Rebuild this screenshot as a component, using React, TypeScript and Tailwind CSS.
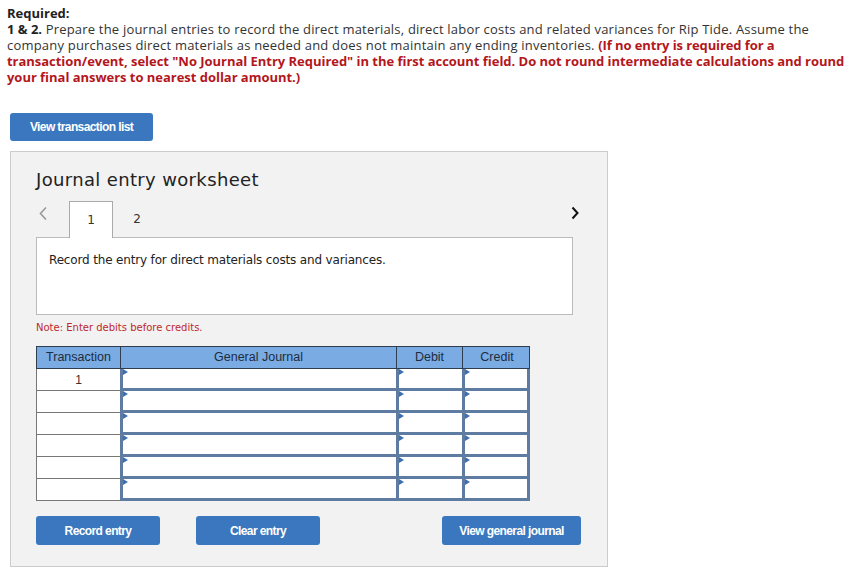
import React from "react";

const Tri = () => (
  <span className="absolute left-0 top-0 w-0 h-0 border-t-[3px] border-b-[3px] border-l-[5px] border-t-transparent border-b-transparent border-l-[#3e6fb0]" />
);

const InputCell = ({ first, last }: { first: boolean; last?: boolean }) => (
  <div
    className={
      "relative bg-white h-full border-[#5e7ca2] border-l-[3px] border-b-[3px] " +
      (first ? "border-t-0 " : "") +
      (last ? "border-r-[3px]" : "")
    }
  >
    <Tri />
  </div>
);

export default function App() {
  const rows = [0, 1, 2, 3, 4, 5];
  return (
    <div className="w-[859px] h-[574px] bg-white overflow-hidden" style={{ fontFamily: '"Open Sans", Lato, sans-serif' }}>
      <div className="pl-[7px] pt-[5px] text-[13px] leading-[16px] text-[#333] whitespace-nowrap tracking-[0.2px]" style={{ fontFamily: '"Open Sans", Lato, sans-serif' }}>
        <div className="font-bold text-[#222] tracking-normal">Required:</div>
        <div>
          <span className="font-bold text-[#222] tracking-normal">1 &amp; 2.</span> Prepare the journal entries to record the direct materials, direct labor costs and related variances for Rip Tide. Assume the
        </div>
        <div>
          company purchases direct materials as needed and does not maintain any ending inventories.{" "}
          <span className="font-bold text-[#b3161c] tracking-[-0.1px]">(If no entry is required for a</span>
        </div>
        <div className="font-bold text-[#b3161c] tracking-[-0.03px]">
          transaction/event, select "No Journal Entry Required" in the first account field. Do not round intermediate calculations and round
        </div>
        <div className="font-bold text-[#b3161c] tracking-[-0.03px]">your final answers to nearest dollar amount.)</div>
      </div>

      <div className="pl-[10px] pt-[28px]">
        <button
          className="w-[143px] h-[28px] rounded-[3px] bg-[#3a77be] text-white text-[12px] font-bold tracking-[-0.6px]"
          style={{ fontFamily: '"Liberation Sans", Arial, sans-serif' }}
        >
          View transaction list
        </button>
      </div>

      <div className="ml-[10px] mt-[10px] w-[598px] h-[416px] bg-[#f2f2f2] border border-[#cccccc] pl-[25px] pt-[17px]">
        <div className="text-[18px] leading-[22px] text-[#222] tracking-[0.35px]" style={{ fontFamily: '"DejaVu Sans", Verdana, sans-serif' }}>
          Journal entry worksheet
        </div>

        <div className="mt-[9px] w-[537px] flex items-end relative h-[37px]" style={{ fontFamily: '"DejaVu Sans", Verdana, sans-serif' }}>
          <svg className="absolute left-[2px] top-[6px]" width="10" height="15" viewBox="0 0 10 15">
            <path d="M8 1.5 L2.5 7.5 L8 13.5" fill="none" stroke="#999999" strokeWidth="1.6" />
          </svg>
          <div className="ml-[33px] w-[44px] h-[37px] bg-white border-t border-l border-r border-[#aaaaaa] flex items-center justify-center text-[12px] text-[#333] relative z-10 -mb-px">
            1
          </div>
          <div className="w-[48px] h-[36px] flex items-center justify-center text-[12px] text-[#333]">2</div>
          <svg className="absolute right-[-7px] top-[6px]" width="10" height="14" viewBox="0 0 10 14">
            <path d="M2.5 1.5 L7.5 7 L2.5 12.5" fill="none" stroke="#111111" strokeWidth="2" />
          </svg>
        </div>

        <div
          className="w-[537px] h-[78px] bg-white border border-[#bbbbbb] px-[12px] pt-[13px] text-[12px] text-[#222] tracking-[-0.16px]"
          style={{ fontFamily: '"DejaVu Sans", Verdana, sans-serif' }}
        >
          Record the entry for direct materials costs and variances.
        </div>

        <div className="mt-[5px] text-[10px] text-[#c0282d]" style={{ fontFamily: '"DejaVu Sans", Verdana, sans-serif' }}>
          Note: Enter debits before credits.
        </div>

        <div className="mt-[11px] w-[494px]" style={{ fontFamily: '"Liberation Sans", Arial, sans-serif' }}>
          <div className="grid grid-cols-[84px_276px_66px_68px] h-[23px] bg-[#7aabe3] border border-[#2f3e4f] text-[12.5px] text-[#1d2d40]">
            <div className="flex items-center justify-center border-r border-[#2f3e4f]">Transaction</div>
            <div className="flex items-center justify-center border-r border-[#2f3e4f]">General Journal</div>
            <div className="flex items-center justify-center border-r border-[#2f3e4f]">Debit</div>
            <div className="flex items-center justify-center">Credit</div>
          </div>
          {rows.map((r) => (
            <div key={r} className="grid grid-cols-[84px_276px_66px_68px] h-[22px]">
              <div className="bg-white border-l border-b border-[#777777] flex items-center justify-center text-[12px] text-[#333]">
                {r === 0 ? "1" : ""}
              </div>
              <InputCell first={r === 0} />
              <InputCell first={r === 0} />
              <InputCell first={r === 0} last />
            </div>
          ))}
        </div>

        <div className="mt-[15px] w-[545px] flex items-center" style={{ fontFamily: '"Liberation Sans", Arial, sans-serif' }}>
          <button className="w-[124px] h-[29px] rounded-[3px] bg-[#3a77be] text-white text-[12px] font-bold tracking-[-0.6px]">
            Record entry
          </button>
          <button className="ml-[36px] w-[124px] h-[29px] rounded-[3px] bg-[#3a77be] text-white text-[12px] font-bold tracking-[-0.6px]">
            Clear entry
          </button>
          <button className="ml-auto w-[139px] h-[29px] rounded-[3px] bg-[#3a77be] text-white text-[12px] font-bold tracking-[-0.6px]">
            View general journal
          </button>
        </div>
      </div>
    </div>
  );
}
